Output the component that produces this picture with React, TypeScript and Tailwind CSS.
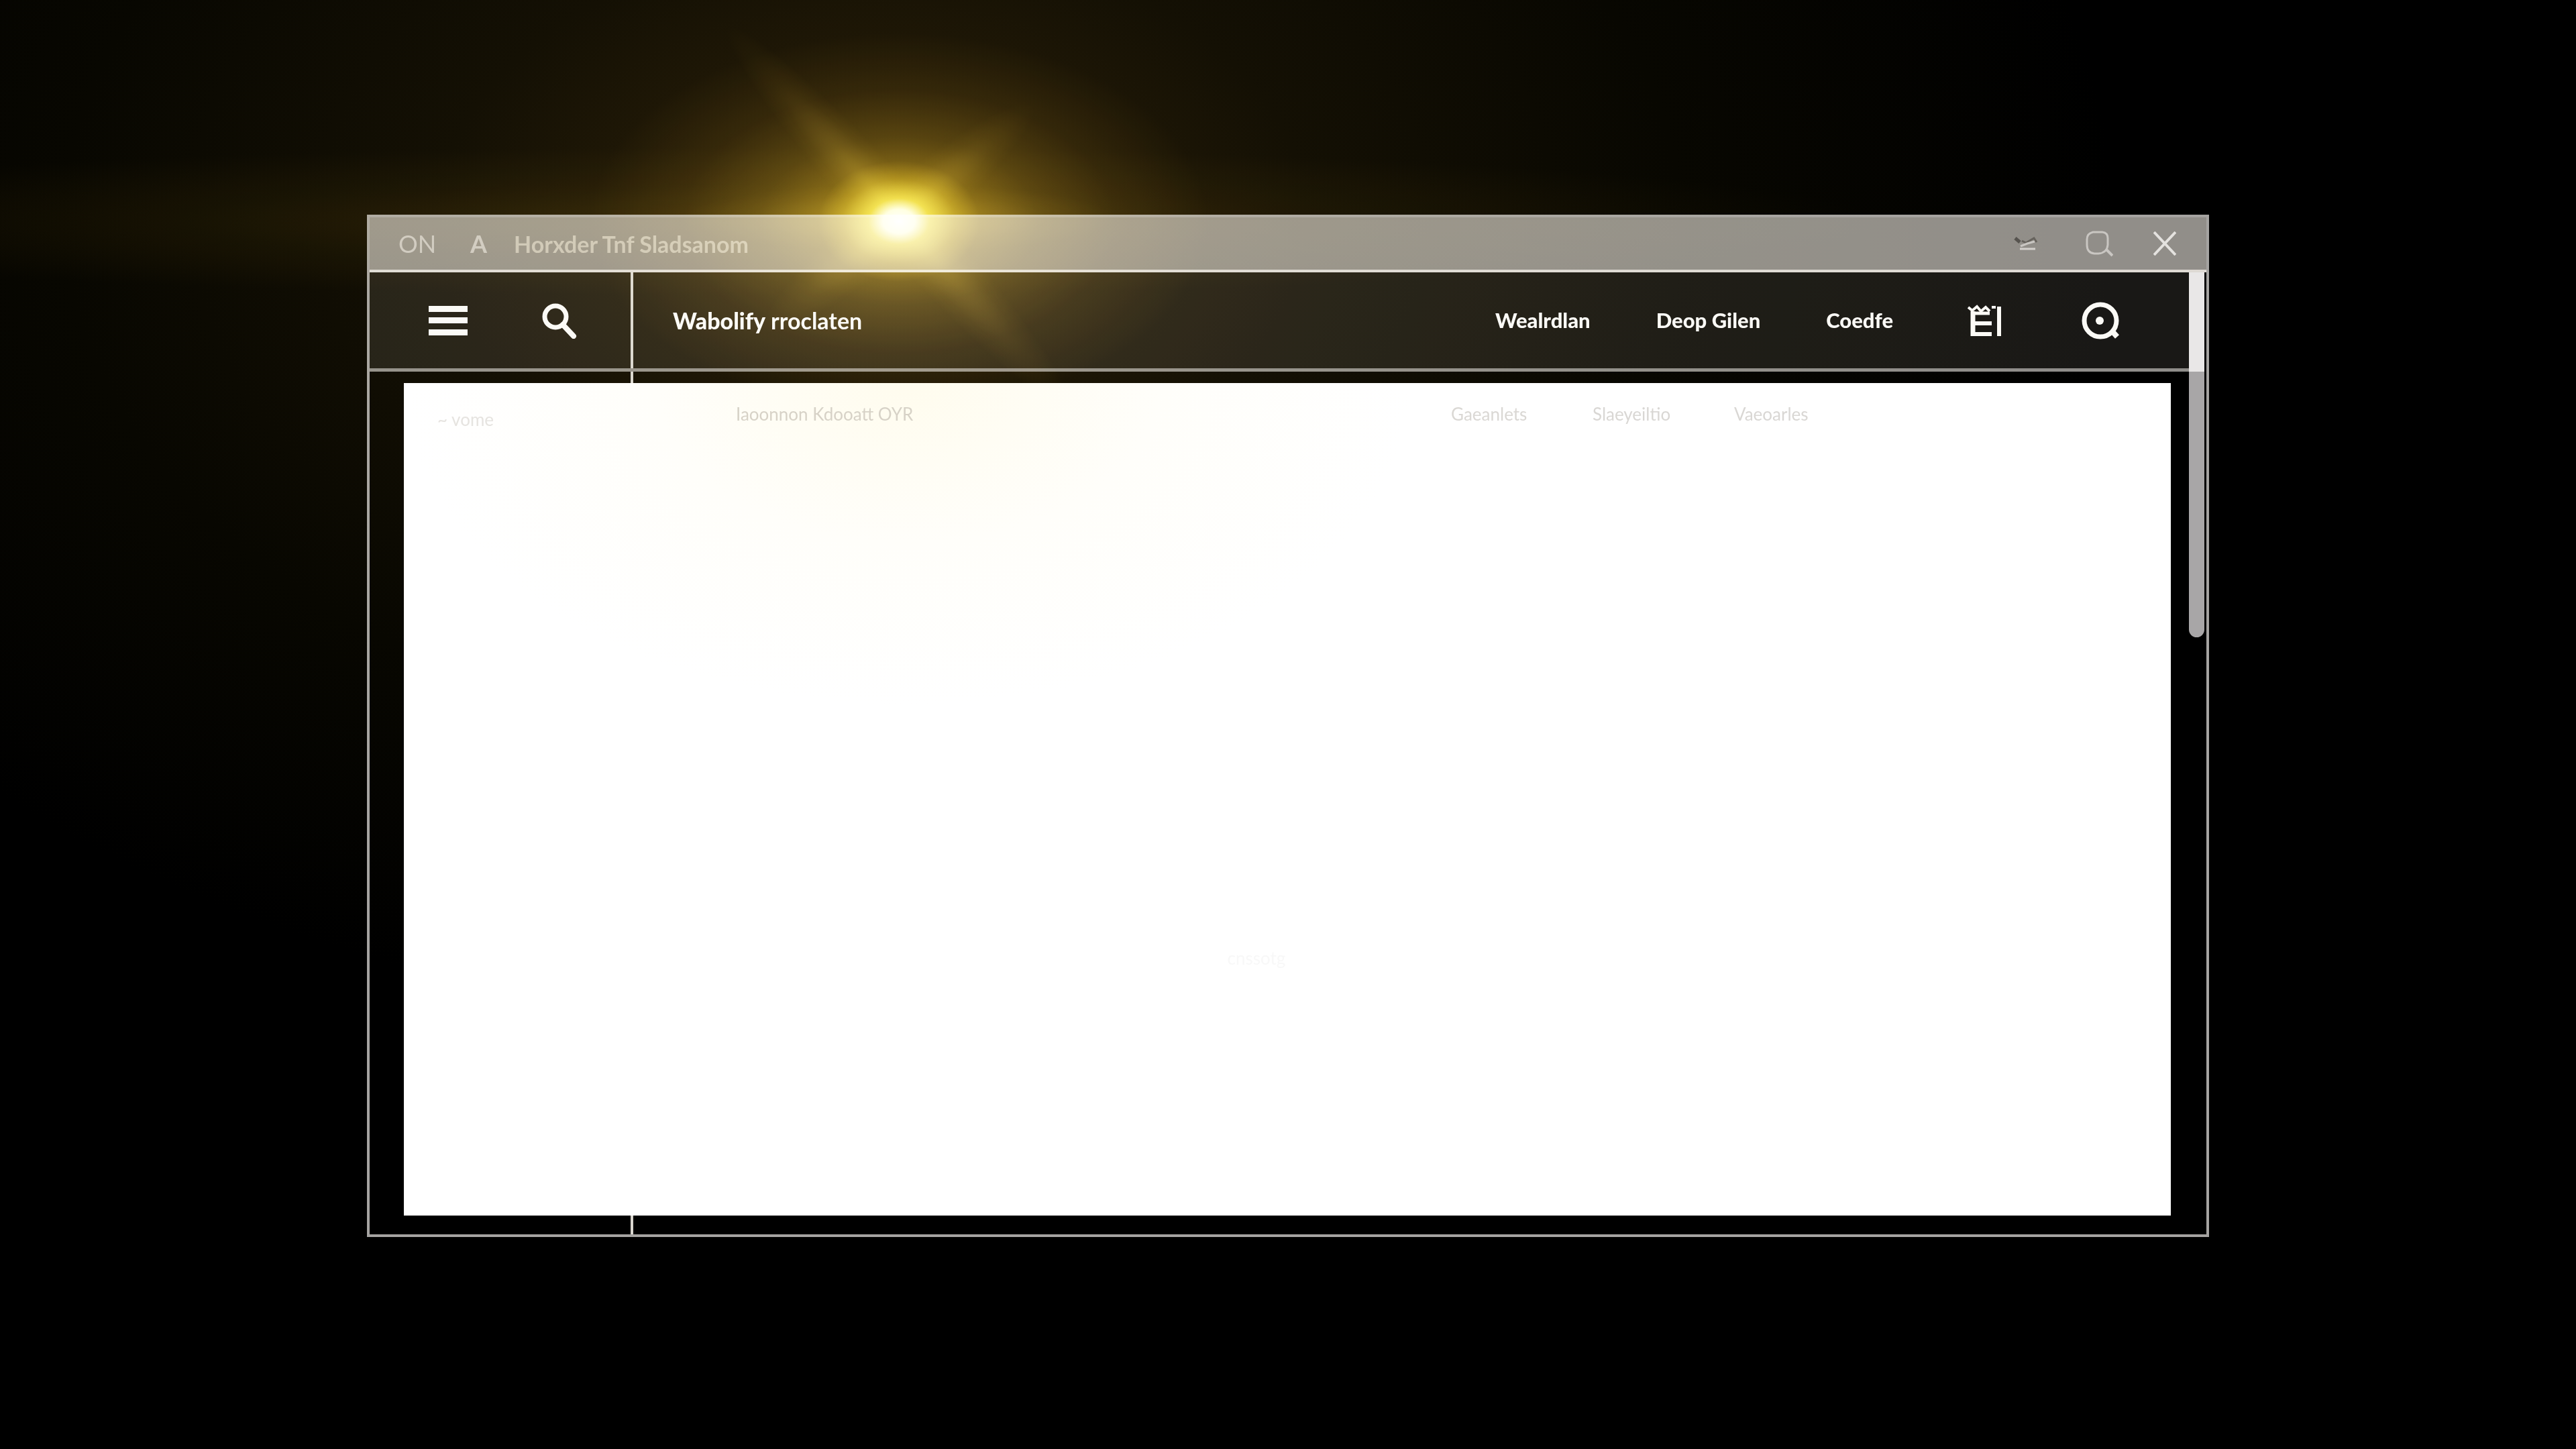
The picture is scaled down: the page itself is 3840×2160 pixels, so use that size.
import React from "react";

function MenuIcon() {
  return (
    <svg viewBox="0 0 58 46" className="h-[46px] w-[58px]" fill="#fbfaf6" aria-hidden="true">
      <rect x="0" y="1" width="58" height="9" />
      <rect x="0" y="18" width="58" height="9" />
      <rect x="0" y="36" width="58" height="9" />
    </svg>
  );
}

function SearchIcon() {
  return (
    <svg viewBox="0 0 52 54" className="h-[54px] w-[52px]" fill="none" stroke="#fbfaf6" aria-hidden="true">
      <circle cx="20" cy="21" r="16" strokeWidth="7" />
      <path d="M31 33 L47 50" strokeWidth="8" strokeLinecap="round" />
    </svg>
  );
}

function ThinSearchIcon() {
  return (
    <svg viewBox="0 0 42 40" className="h-10 w-[42px]" fill="none" stroke="#c9c6c2" strokeWidth="3" aria-hidden="true">
      <path d="M12 3 H26 Q34 4 34 12 V22 Q33 34 20 35 H14 Q3 34 3 22 V14 Q3 5 12 3 Z" />
      <path d="M32 29 L41 38" strokeWidth="4" />
    </svg>
  );
}

function CloseIcon() {
  return (
    <svg viewBox="0 0 34 36" className="h-9 w-[34px]" fill="none" stroke="#e4e2df" strokeWidth="4" aria-hidden="true">
      <path d="M1 1 L33 35 M33 1 L1 35" />
    </svg>
  );
}

function MinimizeIcon() {
  return (
    <svg viewBox="0 0 36 22" className="h-[22px] w-9" fill="none" aria-hidden="true">
      <path d="M2 3 L9 9" stroke="#55524e" strokeWidth="5" />
      <path d="M12 7 L18 10 L30 3 L34 9" stroke="#66625d" strokeWidth="3" />
      <path d="M10 15 L20 11 L31 8" stroke="#c9c6c2" strokeWidth="3" />
      <path d="M9 19 H32" stroke="#d4d1cd" strokeWidth="3" />
    </svg>
  );
}

function LibraryIcon() {
  return (
    <svg viewBox="0 0 52 48" className="h-12 w-[52px]" fill="none" stroke="#fbfaf6" aria-hidden="true">
      <path d="M8 10 V47" strokeWidth="7" />
      <path d="M5 44 H36 M8 28 H36" strokeWidth="6" />
      <path d="M5 13 H33" strokeWidth="5" />
      <path d="M1 4 L7 9 L14 3 L20 10 L27 4 L33 10" strokeWidth="4" />
      <path d="M36 4 H42" strokeWidth="4" />
      <path d="M47 3 V47" strokeWidth="6" />
    </svg>
  );
}

function AccountIcon() {
  return (
    <svg viewBox="0 0 56 56" className="h-14 w-14" fill="none" stroke="#fbfaf6" aria-hidden="true">
      <circle cx="28" cy="28" r="24" strokeWidth="7" />
      <path d="M44 42 L53 52" strokeWidth="8" />
      <circle cx="27" cy="28" r="6" fill="#fbfaf6" stroke="none" />
    </svg>
  );
}

function Flare() {
  return (
    <svg
      viewBox="0 0 3840 2160"
      preserveAspectRatio="none"
      className="pointer-events-none absolute inset-0 h-full w-full mix-blend-screen"
      aria-hidden="true"
    >
      <defs>
        <radialGradient id="ambient">
          <stop offset="0" stopColor="#33280a" />
          <stop offset="0.15" stopColor="#241b07" />
          <stop offset="0.35" stopColor="#141004" />
          <stop offset="0.65" stopColor="#080701" />
          <stop offset="1" stopColor="#000000" />
        </radialGradient>
        <radialGradient id="streak">
          <stop offset="0" stopColor="#1c1503" />
          <stop offset="0.5" stopColor="#0b0801" />
          <stop offset="1" stopColor="#000000" />
        </radialGradient>
        <radialGradient id="halo">
          <stop offset="0" stopColor="#b08a1c" />
          <stop offset="0.2" stopColor="#74580f" />
          <stop offset="0.45" stopColor="#382a08" />
          <stop offset="0.7" stopColor="#150f03" />
          <stop offset="1" stopColor="#000000" />
        </radialGradient>
        <radialGradient id="core">
          <stop offset="0" stopColor="#ffffff" />
          <stop offset="0.2" stopColor="#fffdd8" />
          <stop offset="0.38" stopColor="#c8a828" />
          <stop offset="0.7" stopColor="#4c3a08" />
          <stop offset="1" stopColor="#000000" />
        </radialGradient>
        <radialGradient id="ray">
          <stop offset="0" stopColor="#4a3a10" />
          <stop offset="0.4" stopColor="#221a08" />
          <stop offset="0.7" stopColor="#0c0902" />
          <stop offset="1" stopColor="#000000" />
        </radialGradient>
      </defs>
      <ellipse className="mix-blend-screen" cx="1300" cy="330" rx="1850" ry="1200" fill="url(#ambient)" />
      <ellipse className="mix-blend-screen" cx="1100" cy="330" rx="1700" ry="110" fill="url(#streak)" />
      <ellipse className="mix-blend-screen" cx="1340" cy="330" rx="460" ry="280" fill="url(#halo)" />
      <ellipse className="mix-blend-screen" cx="1340" cy="325" rx="380" ry="46" fill="url(#ray)" transform="rotate(48 1340 325)" />
      <ellipse className="mix-blend-screen" cx="1340" cy="325" rx="260" ry="46" fill="url(#ray)" transform="rotate(-40 1340 325)" />
      <ellipse className="mix-blend-screen" cx="1340" cy="325" rx="320" ry="50" fill="url(#ray)" />
      <ellipse className="mix-blend-screen" cx="1340" cy="330" rx="120" ry="90" fill="url(#core)" />
    </svg>
  );
}

const navLinks = ["Wealrdlan", "Deop Gilen", "Coedfe"];
const pageLinks = ["Gaeanlets", "Slaeyeiltio", "Vaeoarles"];

export default function App() {
  return (
    <div className="relative flex min-h-screen flex-col bg-black px-[547px] pt-[320px] pb-[316px] font-['Lato',sans-serif]">
      <div className="relative flex flex-1 flex-col border-4 border-[#a5a3a1] bg-black">
        <header className="flex h-[82px] items-center border-b-4 border-[#dedad4] bg-[#918e89] pr-[45px] pl-[43px]">
          <span className="w-[107px] text-4xl text-[#cbc7c0]">ON</span>
          <span className="w-[65px] text-4xl font-bold text-[#cbc7c0]">A</span>
          <h1 className="text-[34px] font-bold text-[#c9c3b6]">Horxder Tnf Sladsanom</h1>
          <div className="ml-auto flex items-center">
            <button type="button" aria-label="Minimize" className="mr-[70px]">
              <MinimizeIcon />
            </button>
            <button type="button" aria-label="Find" className="mr-[60px]">
              <ThinSearchIcon />
            </button>
            <button type="button" aria-label="Close">
              <CloseIcon />
            </button>
          </div>
        </header>

        <nav aria-label="Main" className="mr-[26px] flex h-[148px] border-b-[5px] border-[#8f8d8a] bg-[#191816]">
          <div className="flex w-[393px] items-center border-r-4 border-[#d8d5ce] pl-[88px]">
            <button type="button" aria-label="Menu" className="mr-[111px]">
              <MenuIcon />
            </button>
            <button type="button" aria-label="Search">
              <SearchIcon />
            </button>
          </div>
          <a href="#home" className="flex items-center gap-2 pl-[59px] text-[34px] text-[#fbfaf6]">
            <span className="font-black">Wabolify</span>
            <span className="font-bold">rroclaten</span>
          </a>
          <div className="ml-auto flex items-center pr-[104px]">
            <div className="mr-[111px] flex gap-[98px] text-[31px] font-black text-[#fbfaf6]">
              {navLinks.map((label) => (
                <a key={label} href="#nav">
                  {label}
                </a>
              ))}
            </div>
            <button type="button" aria-label="Library" className="mr-[118px]">
              <LibraryIcon />
            </button>
            <button type="button" aria-label="Account">
              <AccountIcon />
            </button>
          </div>
        </nav>

        <main className="flex flex-1 flex-col bg-[linear-gradient(to_right,transparent_389px,#d8d5ce_389px,#d8d5ce_393px,transparent_393px)] pt-[17px] pr-[53px] pb-[28px] pl-[51px]">
          <section className="flex flex-1 flex-col bg-white bg-[radial-gradient(ellipse_750px_480px_at_750px_0px,#fffcee,#fffefa_50%,#ffffff)]">
            <div className="flex h-[92px] items-center pl-[50px] text-[26px] text-[#d2cec6]">
              <span className="w-[445px] pt-4 text-[#e4e2e0]">~ vome</span>
              <span>Iaoonnon Kdooatt OYR</span>
              <div className="ml-auto grid grid-cols-3 pr-[440px] text-[#d8d6d4]">
                {pageLinks.map((label) => (
                  <a key={label} href="#page" className="w-[211px]">
                    {label}
                  </a>
                ))}
              </div>
            </div>
            <p className="pt-[746px] pr-[92px] text-center text-[26px] text-[#f8f8f8]">cnssotg</p>
          </section>
        </main>

        <div className="absolute top-[82px] right-[3px] h-[544px] w-[23px] overflow-hidden rounded-b-full bg-[#a8a6a7]">
          <div className="h-[148px] bg-[#e9e7e7]" />
        </div>
      </div>
      <Flare />
    </div>
  );
}
